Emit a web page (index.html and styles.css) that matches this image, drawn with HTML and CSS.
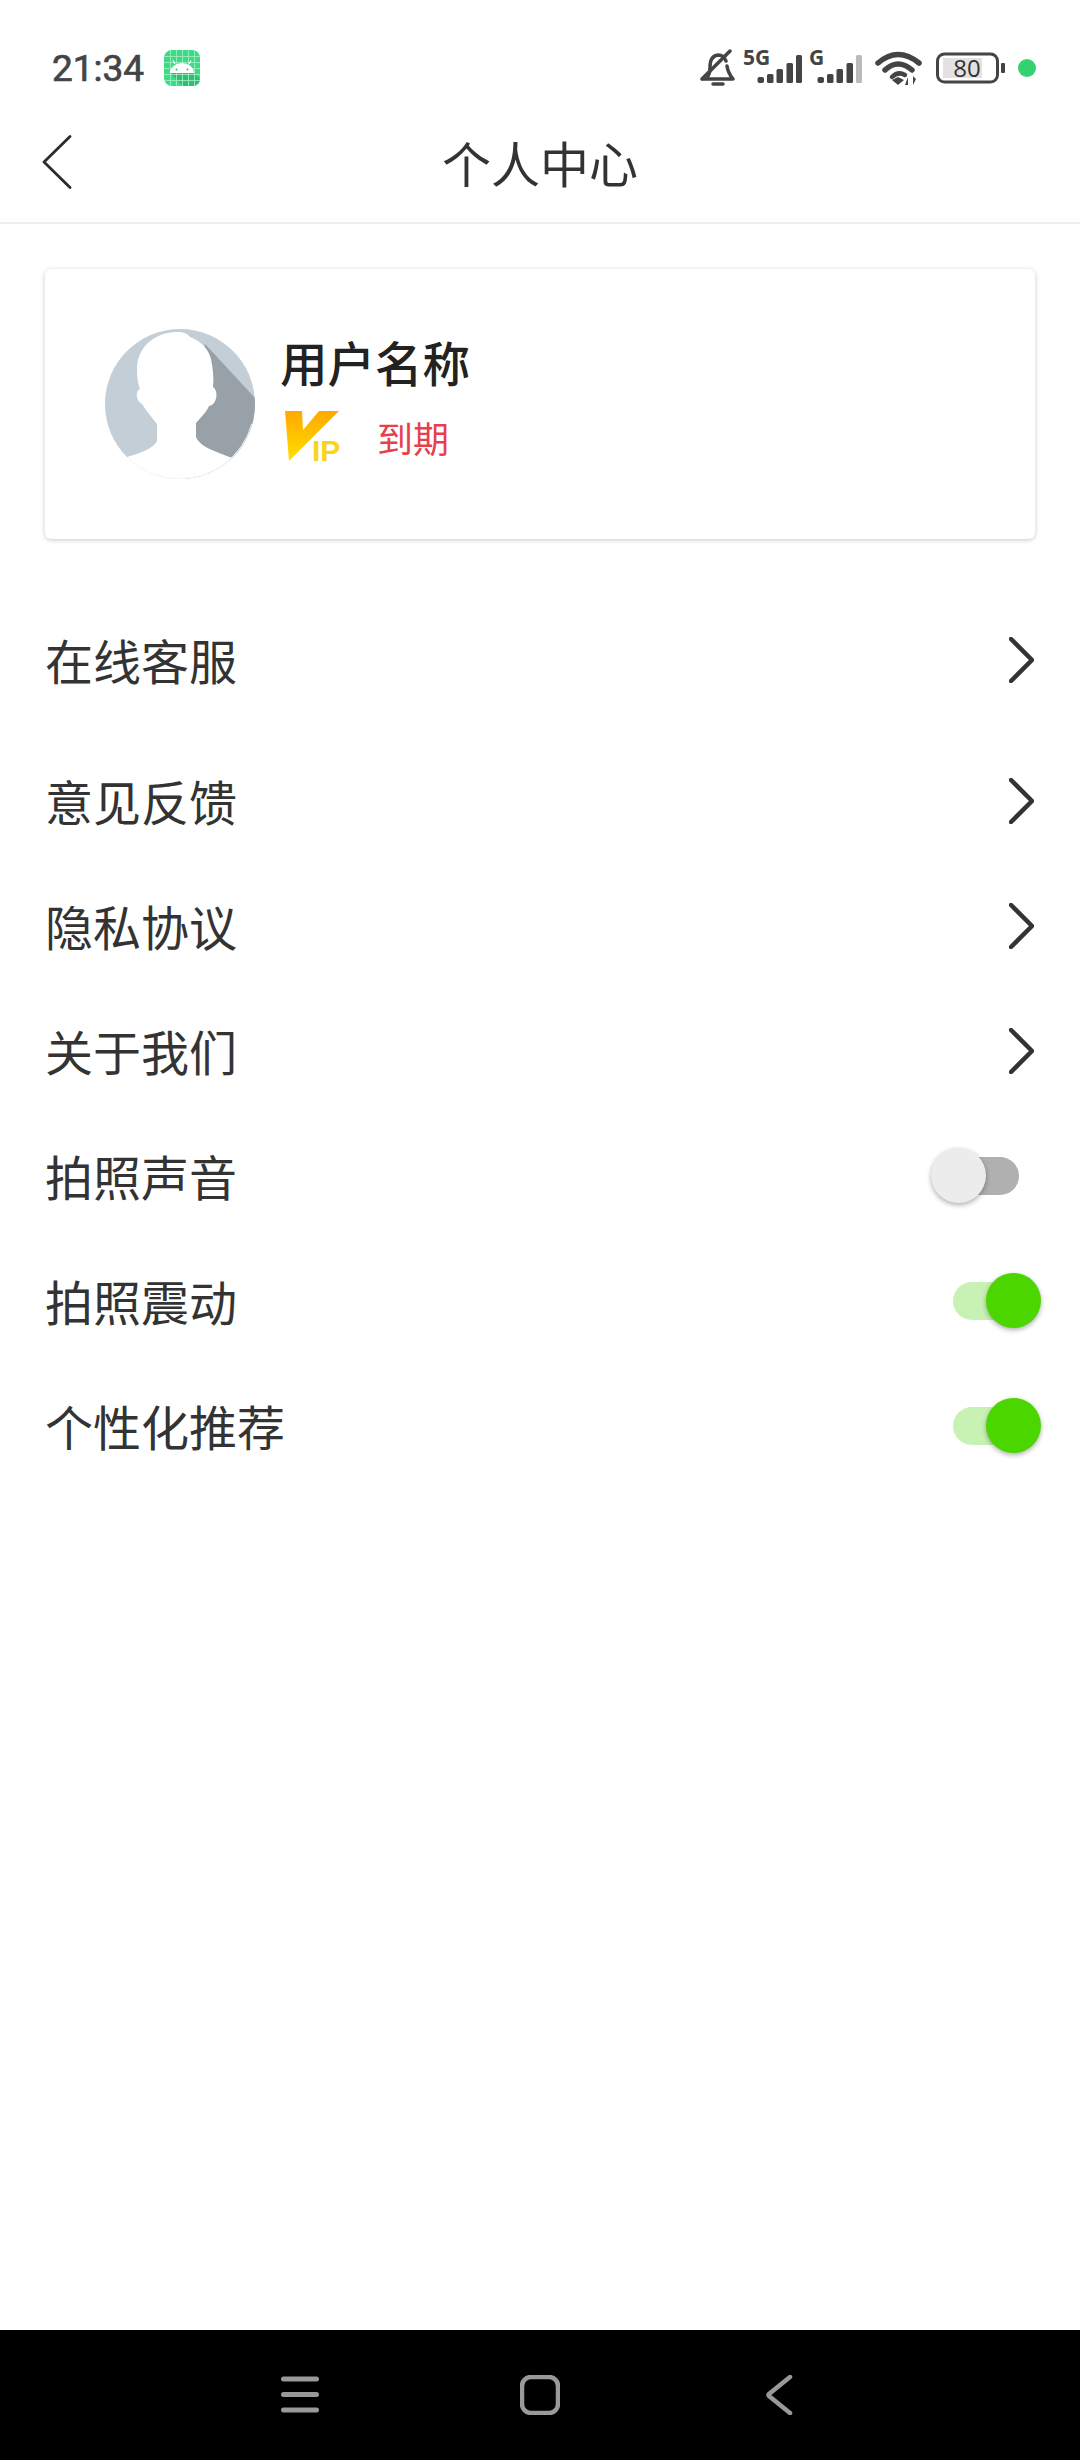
FILE: index.html
```html
<!DOCTYPE html>
<html>

<head>
    <title>个人中心</title>
    <link rel="stylesheet" href="styles.css">
</head>

<body>
    <div class="phone">
        <div class="status-bar">
            <span class="time">21:34</span>
            <svg class="app-icon" viewBox="0 0 36 36" width="36" height="36">
                <rect width="36" height="36" rx="8" fill="#3ddc84" />
                <path d="M6 23 L30 23 L36 29 Q36 36 28 36 L19 36 Z" fill="#33bd72" />
                <path d="M0 6.500H36M0 12.500H36M0 18.500H36M0 24.500H36M0 30.500H36M6.500 0V36M12.500 0V36M18.500 0V36M24.500 0V36M30.500 0V36" stroke="#a5f0c6" stroke-width="0.8" fill="none" />
                <path d="M6 23 A12 10 0 0 1 30 23 Z" fill="#fff" />
                <path d="M11 14 L9 10.500 M25 14 L27 10.500" stroke="#fff" stroke-width="1.200" />
                <circle cx="12.500" cy="19.500" r="1" fill="#2fb56c" />
                <circle cx="23.500" cy="19.500" r="1" fill="#2fb56c" />
            </svg>
            <div class="status-icons">
                <svg class="bell" viewBox="0 0 35 38" width="35" height="38">
                    <path d="M8 27 Q10 24 10 18 Q10 7 18 6 Q24 6 26 12 M27 17 Q28 24 33 30 H3" fill="none" stroke="#444" stroke-width="3.500" stroke-linejoin="round" stroke-linecap="round" />
                    <path d="M13 35 H23" stroke="#444" stroke-width="3.500" stroke-linecap="round" />
                    <path d="M2 30 L30 2" stroke="#444" stroke-width="3.500" stroke-linecap="round" />
                </svg>
                <svg class="signal-five" viewBox="0 -8 59 54" width="59" height="54">
                    <text x="0" y="16" class="net-label">5G</text>
                    <rect x="14.500" y="28" width="6.500" height="6" rx="2" fill="#444" />
                    <rect x="24" y="25" width="6.500" height="9" rx="1.500" fill="#444" />
                    <rect x="33.500" y="20" width="6.500" height="14" rx="1.500" fill="#444" />
                    <rect x="43.500" y="14" width="6.500" height="20" rx="1.500" fill="#444" />
                    <rect x="53" y="6" width="6" height="28" rx="1.500" fill="#444" />
                </svg>
                <svg class="signal-g" viewBox="0 -8 53 54" width="53" height="54">
                    <text x="0" y="16" class="net-label">G</text>
                    <rect x="8.500" y="28" width="6.500" height="6" rx="2" fill="#444" />
                    <rect x="18" y="25" width="6.500" height="9" rx="1.500" fill="#444" />
                    <rect x="27.500" y="20" width="6.500" height="14" rx="1.500" fill="#444" />
                    <rect x="37.500" y="14" width="6.500" height="20" rx="1.500" fill="#444" />
                    <rect x="47" y="6" width="6" height="28" rx="1.500" fill="#bbb" />
                </svg>
                <svg class="wifi" viewBox="0 0 47 36" width="47" height="36">
                    <path d="M3 13 Q23 -4 44 13" fill="none" stroke="#444" stroke-width="5.500" stroke-linecap="round" />
                    <path d="M10 20 Q23 8 37 20" fill="none" stroke="#444" stroke-width="5.500" stroke-linecap="round" />
                    <path d="M17 27 Q23 21 30 25" fill="none" stroke="#444" stroke-width="4.500" stroke-linecap="round" />
                    <path d="M17 30 L23 27 L29 30 L23 35 Z" fill="#444" />
                    <path d="M33 27 L33 35 L30 35 Z M38 26 L38 35 L41 29 Z" fill="#444" />
                </svg>
                <svg class="battery" viewBox="0 0 69 36" width="69" height="36">
                    <rect x="1.500" y="4" width="60" height="28" rx="7" fill="#fff" stroke="#444" stroke-width="3" />
                    <rect x="7" y="8" width="39" height="20" fill="#e2e2e2" />
                    <text x="31" y="27" class="battery-text">80</text>
                    <rect x="65" y="13" width="4" height="10" rx="1" fill="#444" />
                </svg>
                <span class="dot"></span>
            </div>
        </div>

        <div class="top-bar">
            <svg class="back" viewBox="0 0 30 54" width="30" height="54">
                <path d="M28 1.500 L2 27 L28 52.500" fill="none" stroke="#2c2c2c" stroke-width="2.800" stroke-linecap="round" stroke-linejoin="round" />
            </svg>
            <h1>个人中心</h1>
        </div>

        <div class="content">
            <div class="card">
                <svg class="avatar" viewBox="0 0 150 150" width="150" height="150">
                    <defs>
                        <clipPath id="round">
                            <circle cx="75" cy="75" r="75" />
                        </clipPath>
                    </defs>
                    <g clip-path="url(#round)">
                        <rect width="150" height="150" fill="#c3ced6" />
                        <path d="M100 15 L150 69 L150 150 L70 150 Z" fill="#98a1a8" />
                        <path d="M72 3 C50 3 32 18 32 40 C32 50 33 55 35 60 C30 62 31 72 37 75 C40 80 48 90 52 95 L52 112 C48 120 35 124 22 128 L10 150 L140 150 L127 129 C110 122 95 118 91 108 L91 94 C98 86 102 82 104 77 C112 76 114 62 108 58 C109 50 108 40 106 30 C102 15 90 10 85 8 C82 4 78 3 72 3 Z" fill="#fff" />
                    </g>
                    <circle cx="75" cy="75" r="74.500" fill="none" stroke="#f6f7f8" stroke-width="1" stroke-dasharray="120 1000" stroke-dashoffset="-20" />
                </svg>
                <div class="user-info">
                    <div class="user-name">用户名称</div>
                    <div class="vip-line">
                        <svg class="vip" viewBox="0 0 55 60" width="55" height="60">
                            <defs>
                                <linearGradient id="gold" x1="0" y1="0" x2="0" y2="1">
                                    <stop offset="0" stop-color="#ffa800" />
                                    <stop offset="1" stop-color="#ffe000" />
                                </linearGradient>
                            </defs>
                            <path d="M0 0 L17 0 L18 19 L34 0 L54 0 L4 50 Z" fill="url(#gold)" />
                            <text x="27" y="50" class="vip-text">IP</text>
                        </svg>
                        <span class="expire">到期</span>
                    </div>
                </div>
            </div>

            <div class="menu">
                <div class="row row-first">
                    <span>在线客服</span>
                    <svg class="chevron" viewBox="0 0 25 46" width="25" height="46"><path d="M2 2 L23 23 L2 44" /></svg>
                </div>
                <div class="row">
                    <span>意见反馈</span>
                    <svg class="chevron" viewBox="0 0 25 46" width="25" height="46"><path d="M2 2 L23 23 L2 44" /></svg>
                </div>
                <div class="row">
                    <span>隐私协议</span>
                    <svg class="chevron" viewBox="0 0 25 46" width="25" height="46"><path d="M2 2 L23 23 L2 44" /></svg>
                </div>
                <div class="row">
                    <span>关于我们</span>
                    <svg class="chevron" viewBox="0 0 25 46" width="25" height="46"><path d="M2 2 L23 23 L2 44" /></svg>
                </div>
                <div class="row">
                    <span>拍照声音</span>
                    <div class="switch"><div class="thumb"></div></div>
                </div>
                <div class="row">
                    <span>拍照震动</span>
                    <div class="switch on"><div class="thumb"></div></div>
                </div>
                <div class="row">
                    <span>个性化推荐</span>
                    <div class="switch on"><div class="thumb"></div></div>
                </div>
            </div>
        </div>

        <div class="nav-bar">
            <svg viewBox="0 0 40 40" width="40" height="40">
                <path d="M3.500 4H36.500M3.500 19.500H36.500M3.500 35H36.500" stroke="#999" stroke-width="5" stroke-linecap="round" fill="none" />
            </svg>
            <svg viewBox="0 0 40 40" width="40" height="40">
                <rect x="2" y="2" width="36" height="36" rx="9" stroke="#999" stroke-width="4.500" fill="none" />
            </svg>
            <svg viewBox="0 0 40 40" width="40" height="40">
                <path d="M30 2 L9 19 Q8 20 9 21 L30 38" stroke="#999" stroke-width="4.500" stroke-linecap="round" fill="none" />
            </svg>
        </div>
    </div>
</body>

</html>
```

FILE: styles.css
```css
body {
    margin: 0;
    padding: 0;
    font-family: "Noto Sans CJK SC", "Noto Sans", sans-serif;
    color: #333;
    background-color: #fff;
}

.phone {
    width: 1080px;
    height: 2460px;
    display: flex;
    flex-direction: column;
    overflow: hidden;
}

.status-bar {
    height: 40px;
    padding: 48px 44px 0 52px;
    display: flex;
    align-items: center;
}

.time {
    font-family: Roboto, sans-serif;
    font-size: 37px;
    font-weight: 400;
    color: #444;
    -webkit-text-stroke: 0.7px #444;
}

.app-icon {
    margin-left: 20px;
}

.status-icons {
    margin-left: auto;
    display: flex;
    align-items: center;
}

.net-label {
    font-family: "Open Sans", sans-serif;
    font-size: 21px;
    font-weight: 700;
    fill: #444;
}

.signal-five {
    margin-left: 8px;
}

.signal-g {
    margin-left: 7px;
}

.wifi {
    margin-left: 13px;
}

.battery {
    margin-left: 14px;
}

.battery-text {
    font-family: "Open Sans", sans-serif;
    font-size: 24px;
    fill: #333;
    text-anchor: middle;
}

.dot {
    width: 18px;
    height: 18px;
    margin-left: 13px;
    border-radius: 50%;
    background-color: #35d070;
}

.top-bar {
    height: 122px;
    padding-top: 12px;
    border-bottom: 2px solid #eee;
    padding-left: 42px;
    display: flex;
    align-items: center;
    position: relative;
}

.back {
    margin-top: 2px;
}

.top-bar h1 {
    position: absolute;
    left: 0;
    right: 0;
    margin: 0;
    text-align: center;
    font-size: 49px;
    font-weight: 400;
    color: #333;
}

.content {
    flex: 1;
    padding: 45px 45px 0;
}

.card {
    height: 270px;
    box-sizing: border-box;
    padding: 60px 0 0 60px;
    border-radius: 6px;
    box-shadow: 0 1px 5px rgba(0, 0, 0, 0.22);
    display: flex;
}

.avatar {
    flex-shrink: 0;
}

.user-info {
    margin-left: 25px;
}

.user-name {
    font-size: 47.500px;
    font-weight: 500;
    line-height: 60px;
    color: #222;
    margin-top: 3px;
}

.vip-line {
    margin-top: 19px;
    margin-left: 5px;
    display: flex;
    align-items: flex-start;
}

.vip-text {
    font-family: "Liberation Sans", sans-serif;
    font-size: 30px;
    font-weight: 700;
    fill: #f7d51d;
}

.expire {
    margin-left: 37px;
    font-size: 36px;
    line-height: 52px;
    color: #e8404a;
}

.menu {
    margin: 57px -7px 0 0;
}

.row {
    height: 125px;
    display: flex;
    align-items: center;
    justify-content: space-between;
    font-size: 48px;
    color: #333;
}

.row-first {
    margin-bottom: 16px;
}

.chevron {
    margin-right: 8px;
    margin-top: 2px;
}

.chevron path {
    fill: none;
    stroke: #333;
    stroke-width: 4.5;
    stroke-linecap: round;
    stroke-linejoin: round;
}

.switch {
    width: 66px;
    height: 38px;
    margin-right: 23px;
    margin-top: 2px;
    border-radius: 19px;
    background-color: #b0b0b0;
    position: relative;
}

.thumb {
    width: 55px;
    height: 55px;
    border-radius: 50%;
    background-color: #ececec;
    box-shadow: 0 2px 5px rgba(0, 0, 0, 0.32);
    position: absolute;
    left: -22px;
    top: -9px;
}

.switch.on {
    background-color: #c8f2b4;
}

.switch.on .thumb {
    left: 33px;
    background-color: #4cd600;
}

.nav-bar {
    height: 130px;
    background-color: #000;
    display: flex;
    align-items: center;
    justify-content: center;
    gap: 200px;
}
```
